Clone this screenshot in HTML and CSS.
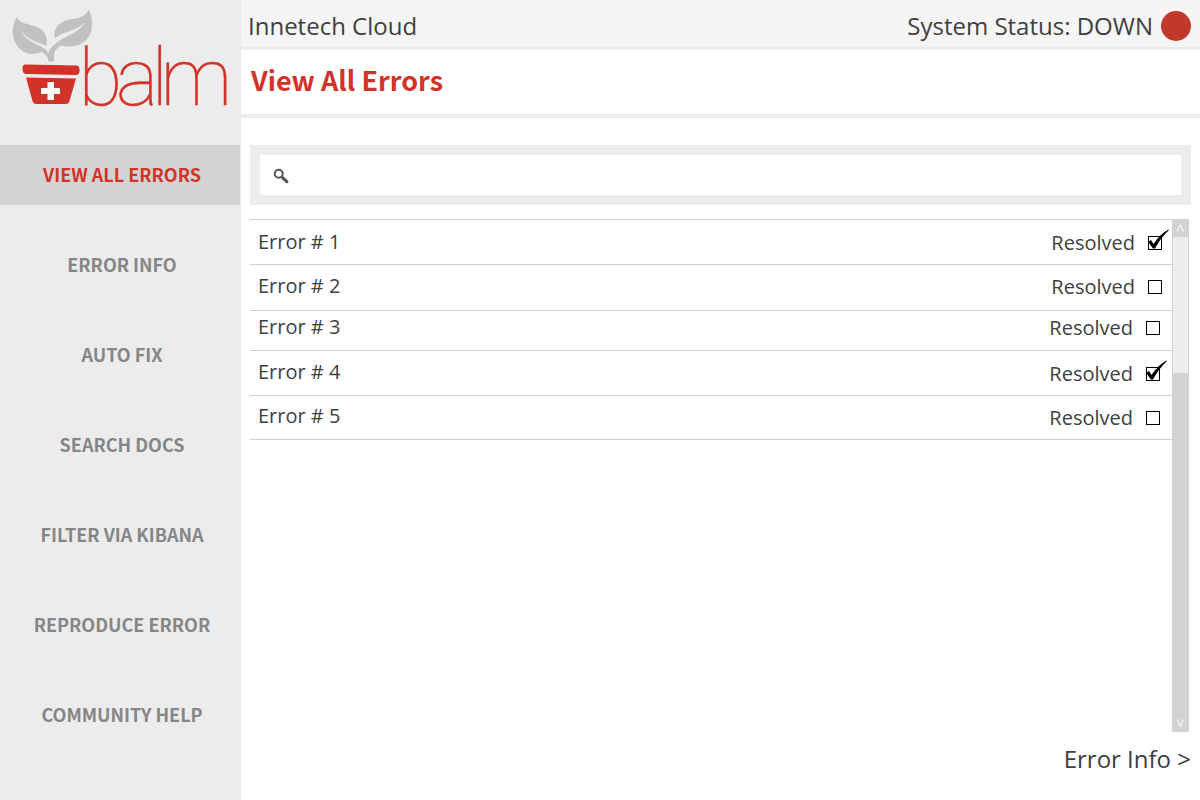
FILE: index.html
```html
<!DOCTYPE html>
<html lang="en">
<head>
<meta charset="utf-8">
<title>Balm – View All Errors</title>
<link rel="stylesheet" href="styles.css">
</head>
<body>
<div class="app">
  <aside class="sidebar">
    <svg class="logo" viewBox="0 0 241 145" role="img" aria-label="balm">
      <path class="leaf" d="M16.500 17C19 24 30 24 37 27C44 30 48 36 46.500 46C39 42 27 41 20 29C24 40 35 43 42 47C45.500 49 47.500 51 48 53.500C50 47 56 43 62 39C70 34.500 80 32 84.500 22C77 32 64 30 55 38.500C52 26 63 20.500 70 19.500C79 18.500 85 16 89 10C95 23 92 36 84 42C77 47 68 47.500 61 45.500C57 48 54 51 54 55V61.500H48V58C46 55 44 53 41 52C35 55 26 55 20 49C11 41 11 27 16.500 17Z"/>
      <path class="pot" d="M25 64.500L77 65.500Q79.500 66 79.500 69.500V71.500Q79 75 76 75L26 74Q22.500 73.500 22.500 69Q22.500 64.500 25 64.500ZM26 77.500L76 78.500L69.500 101Q68.500 104 66 104H36Q33.500 104 32.500 101Z"/>
      <path class="cross" d="M47.500 82H54V88H60V94H54V100H47.500V94H41V88H47.500Z"/>
      <text class="wordmark" y="105" x="78.500 116 151.500 160.500">balm</text>
    </svg>
    <nav class="nav">
      <a class="nav-item active">VIEW ALL ERRORS</a>
      <a class="nav-item">ERROR INFO</a>
      <a class="nav-item">AUTO FIX</a>
      <a class="nav-item">SEARCH DOCS</a>
      <a class="nav-item">FILTER VIA KIBANA</a>
      <a class="nav-item">REPRODUCE ERROR</a>
      <a class="nav-item">COMMUNITY HELP</a>
    </nav>
  </aside>
  <main class="main">
    <header class="topbar">
      <span>Innetech Cloud</span>
      <span class="status">System Status: DOWN<i class="status-dot"></i></span>
    </header>
    <h1 class="title">View All Errors</h1>
    <div class="search">
      <div class="search-field">
        <svg class="search-icon" viewBox="0 0 16 16"><circle cx="5.700" cy="5.700" r="4"/><path class="bridge" d="M8.500 8.500L10.500 10.500"/><path class="handle" d="M10.300 10.300L13.800 13.600"/></svg>
      </div>
    </div>
    <section class="list">
      <div class="rows">
        <div class="row r1"><span class="name">Error # 1</span><span class="resolved">Resolved<span class="box"><svg class="tick" viewBox="0 0 24 22"><path d="M2 13L5 11L7.500 15Q14 5 22.500 .5L23 1Q14.500 9 9 19.500H7Z"/></svg></span></span></div>
        <div class="row r2"><span class="name">Error # 2</span><span class="resolved">Resolved<span class="box"></span></span></div>
        <div class="row r3"><span class="name">Error # 3</span><span class="resolved">Resolved<span class="box"></span></span></div>
        <div class="row r4"><span class="name">Error # 4</span><span class="resolved">Resolved<span class="box"><svg class="tick" viewBox="0 0 24 22"><path d="M2 13L5 11L7.500 15Q14 5 22.500 .5L23 1Q14.500 9 9 19.500H7Z"/></svg></span></span></div>
        <div class="row r5"><span class="name">Error # 5</span><span class="resolved">Resolved<span class="box"></span></span></div>
      </div>
      <div class="scrollbar"><span class="arrow">&lt;</span><span class="thumb"></span><span class="arrow down">&gt;</span></div>
    </section>
    <footer class="footer"><a>Error Info &gt;</a></footer>
  </main>
</div>
</body>
</html>
```
FILE: styles.css
```css
* { box-sizing: border-box; }
body { margin: 0; background: #fff; color: #404040; font-family: "Open Sans", sans-serif; }
.app { display: flex; width: 1200px; height: 800px; overflow: hidden; }
.sidebar { width: 241px; background: #ececec; flex: none; }
.logo { display: block; width: 241px; height: 145px; }
.leaf { fill: #c1c1c1; }
.pot { fill: #d13328; }
.cross { fill: #fff; }
.wordmark { font: 100 80px Roboto, sans-serif; fill: #d13328; stroke: #d13328; stroke-width: .5; }
.nav { display: flex; flex-direction: column; gap: 30px; width: 240px; }
.nav-item { height: 60px; padding-left: 4px; text-align: center; white-space: nowrap; font: 700 18px/58px "Noto Sans CJK SC", sans-serif; color: #868686; }
.nav-item.active { background: #d3d3d3; color: #d13328; }
.main { flex: 1; display: flex; flex-direction: column; min-width: 0; }
.topbar { height: 50px; padding: 3px 9px 0 7px; background: #f5f5f5; border-bottom: 3px solid #ececec; display: flex; justify-content: space-between; font-size: 24px; line-height: 46px; }
.status { display: flex; align-items: center; gap: 8px; height: 46px; }
.status-dot { width: 30px; height: 30px; border-radius: 50%; background: #c0392b; }
.title { margin: 0; height: 68px; padding-left: 10px; border-bottom: 4px solid #ececec; color: #d13328; font: 700 27px/59px "Noto Sans CJK SC", sans-serif; }
.search { margin: 27px 9px 0; height: 60px; padding: 10px; background: #ececec; }
.search-field { height: 40px; padding: 13px; background: #fff; }
.search-icon { display: block; width: 16px; height: 16px; fill: none; stroke: #555; }
.search-icon circle { stroke-width: 2; }
.bridge { stroke-width: 2; }
.handle { stroke-width: 3.200; stroke-linecap: round; }
.list { display: flex; height: 513px; margin: 14px 11px 0 9px; }
.rows { flex: 1; border-top: 1px solid #d0d0d0; }
.row { display: flex; justify-content: space-between; align-items: flex-start; padding-left: 8px; padding-right: 10px; border-bottom: 1px solid #d0d0d0; font-size: 20px; line-height: 28px; }
.name { padding-top: 8px; }
.resolved { display: flex; align-items: center; gap: 13px; padding-top: 9px; }
.r1 { height: 45px; }
.r2 { height: 46px; }
.r2 .name { padding-top: 7px; }
.r2 .resolved { padding-top: 8px; }
.r3 { height: 40px; padding-right: 12px; }
.r3 .name { padding-top: 2px; }
.r3 .resolved { padding-top: 3px; }
.r4 { height: 45px; padding-right: 12px; }
.r4 .name { padding-top: 7px; }
.r5 { height: 44px; padding-right: 12px; }
.r5 .name { padding-top: 6px; }
.r5 .resolved { padding-top: 8px; }
.box { position: relative; width: 14px; height: 14px; border: 1px solid #000; }
.tick { position: absolute; left: -3px; top: -8px; width: 24px; height: 22px; fill: #000; }
.scrollbar { width: 17px; background: #d3d3d3; display: flex; flex-direction: column; align-items: center; }
.arrow { width: 18px; height: 18px; line-height: 18px; font-size: 15px; text-align: center; color: #fff; transform: rotate(90deg); }
.thumb { width: 15px; height: 136px; background: #eee; }
.down { margin-top: auto; }
.footer { padding: 9px 9px 0 0; text-align: right; font-size: 24px; line-height: 36px; }
```
